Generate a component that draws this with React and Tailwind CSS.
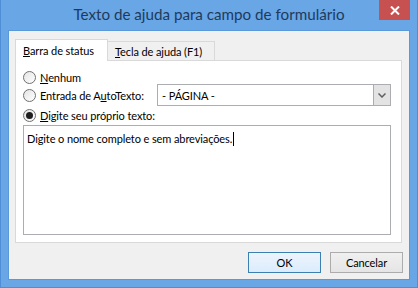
import React from "react";

function Radio({ checked }) {
  return (
    <span className="relative flex h-[13px] w-[13px] shrink-0 items-center justify-center rounded-full border border-[#707070] bg-gradient-to-br from-[#e4e4e4] to-white">
      {checked && <span className="h-[7px] w-[7px] rounded-full bg-[#1f1f1f]" />}
    </span>
  );
}

export default function App() {
  const font = { fontFamily: 'Lato, "Noto Sans", sans-serif' };
  return (
    <div className="flex h-[288px] w-[418px] flex-col whitespace-nowrap border-x border-b border-[#4f8ed6] bg-[#68a6e6] text-[11px] leading-[15px] tracking-[-0.1px] text-black" style={font}>
      <div className="relative flex h-[30px] shrink-0 items-center justify-center">
        <span className="text-[15.2px] leading-none tracking-normal text-[#1e3a5c]">Texto de ajuda para campo de formulário</span>
        <div className="absolute right-[7px] top-0 flex h-[20px] w-[31px] items-center justify-center bg-[#c75050]">
          <svg width="10" height="9" viewBox="0 0 10 9">
            <path d="M1 0.5 L9 8.5 M9 0.5 L1 8.5" stroke="white" strokeWidth="2" />
          </svg>
        </div>
      </div>
      <div className="mx-[7px] flex h-[250px] flex-col border border-[#5a98dc] bg-[#f0f0f0] px-[6px] pt-[7px]">
        <div className="flex h-[22px] items-end">
          <div className="relative z-10 -mb-px flex h-[22px] w-[93px] items-center border border-b-0 border-[#d9d9d9] bg-white pl-[7px]">
            <span><u>B</u>arra de status</span>
          </div>
          <div className="flex h-[19px] w-[107px] items-center border border-b-0 border-l-0 border-[#d9d9d9] bg-[#f0f0f0] pl-[7px]">
            <span><u>T</u>ecla de ajuda (F1)</span>
          </div>
        </div>
        <div className="flex h-[183px] w-[387px] flex-col border border-[#d9d9d9] bg-white pl-[7px] pr-[10px] pt-[10px]">
          <div className="flex h-[12px] items-center gap-[4px]">
            <Radio />
            <span><u>N</u>enhum</span>
          </div>
          <div className="mt-[1px] flex h-[22px] items-center">
            <div className="flex w-[134px] items-center gap-[4px]">
              <Radio />
              <span>Entrada de A<u>u</u>toTexto:</span>
            </div>
            <div className="flex h-[22px] flex-1 items-center border border-[#abadb3] bg-white">
              <span className="flex-1 pl-[4px]">- PÁGINA -</span>
              <div className="flex h-[20px] w-[17px] items-center justify-center border-l border-[#acacac] bg-[#e3e3e3]">
                <svg width="8" height="5" viewBox="0 0 8 5">
                  <path d="M0.5 0.5 L4 4 L7.5 0.5" stroke="#606060" strokeWidth="1.5" fill="none" />
                </svg>
              </div>
            </div>
          </div>
          <div className="mt-[2px] flex h-[14px] items-center gap-[4px]">
            <Radio checked />
            <span><u>D</u>igite seu próprio texto:</span>
          </div>
          <div className="mt-[3px] h-[110px] border border-[#abadb3] bg-white px-[3px] pt-[3px]">
            <span>Digite o nome completo e sem abreviações.</span>
            <span className="ml-px inline-block h-[14px] w-px translate-y-[3px] bg-black" />
          </div>
        </div>
        <div className="mt-[9px] flex justify-end gap-[9px]">
          <div className="flex h-[21px] w-[73px] items-center justify-center border border-[#3c7fb1] bg-gradient-to-b from-[#ecf4fc] to-[#dcecfc]">OK</div>
          <div className="flex h-[21px] w-[73px] items-center justify-center border border-[#acacac] bg-gradient-to-b from-[#f0f0f0] to-[#e5e5e5]">Cancelar</div>
        </div>
      </div>
    </div>
  );
}
